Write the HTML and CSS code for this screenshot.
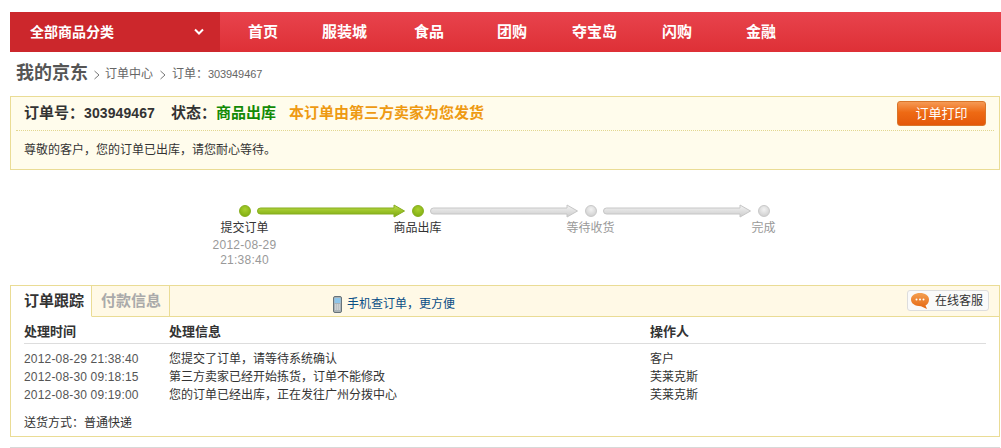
FILE: index.html
```html
<!DOCTYPE html>
<html lang="zh-CN">
<head>
<meta charset="utf-8">
<title>订单详情</title>
<link rel="stylesheet" href="styles.css">
</head>
<body>
<div class="page">
  <nav class="nav">
    <div class="nav-all">
      <span>全部商品分类</span>
      <svg class="chev" width="12" height="8" viewBox="0 0 12 8"><path d="M2 1.5 6 5.5 10 1.5" fill="none" stroke="#fff" stroke-width="2"/></svg>
    </div>
    <ul class="nav-list">
      <li class="w-2">首页</li>
      <li class="w-3">服装城</li>
      <li class="w-2">食品</li>
      <li class="w-2">团购</li>
      <li class="w-3">夺宝岛</li>
      <li class="w-2">闪购</li>
      <li class="w-2">金融</li>
    </ul>
  </nav>

  <div class="crumb">
    <strong class="crumb-title">我的京东</strong>
    <svg class="crumb-sep" width="8" height="10" viewBox="0 0 8 10"><path d="M1.5 1 6 5 1.5 9" fill="none" stroke="#777" stroke-width="1"/></svg>
    <span>订单中心</span>
    <svg class="crumb-sep crumb-sep-2" width="8" height="10" viewBox="0 0 8 10"><path d="M1.5 1 6 5 1.5 9" fill="none" stroke="#777" stroke-width="1"/></svg>
    <span>订单：<span class="crumb-num">303949467</span></span>
  </div>

  <section class="status">
    <div class="status-head">
      <div class="status-line">
        <span class="status-label">订单号：<span class="status-num">303949467</span></span>
        <span class="status-label state">状态：<span class="green">商品出库</span></span>
        <span class="orange">本订单由第三方卖家为您发货</span>
      </div>
      <button class="print" type="button">订单打印</button>
    </div>
    <p class="status-msg">尊敬的客户，您的订单已出库，请您耐心等待。</p>
  </section>

  <section class="steps">
    <div class="track">
      <span class="dot dot-on"></span>
      <svg class="arrow" width="149" height="16" viewBox="0 0 149 16"><defs><linearGradient id="g" x1="0" y1="0" x2="0" y2="1"><stop offset="0" stop-color="#c2dc55"/><stop offset=".5" stop-color="#9cc428"/><stop offset="1" stop-color="#7aa512"/></linearGradient><linearGradient id="h" x1="0" y1="0" x2="0" y2="1"><stop offset="0" stop-color="#f4f4f4"/><stop offset="1" stop-color="#cccccc"/></linearGradient></defs><path d="M3.500 5H137V2L147.500 8 137 14V11H3.500A3 3 0 0 1 3.500 5Z" fill="url(#g)" stroke="#86ad1e" stroke-width="1"/></svg>
      <span class="dot dot-on"></span>
      <svg class="arrow" width="149" height="16" viewBox="0 0 149 16"><path d="M3.500 5H137V2L147.500 8 137 14V11H3.500A3 3 0 0 1 3.500 5Z" fill="url(#h)" stroke="#c6c6c6" stroke-width="1"/></svg>
      <span class="dot"></span>
      <svg class="arrow" width="149" height="16" viewBox="0 0 149 16"><path d="M3.500 5H137V2L147.500 8 137 14V11H3.500A3 3 0 0 1 3.500 5Z" fill="url(#h)" stroke="#c6c6c6" stroke-width="1"/></svg>
      <span class="dot"></span>
    </div>
    <div class="labels">
      <div class="step">
        <div class="step-name">提交订单</div>
        <div class="step-time">2012-08-29<br>21:38:40</div>
      </div>
      <div class="step"><div class="step-name">商品出库</div></div>
      <div class="step off"><div class="step-name">等待收货</div></div>
      <div class="step off"><div class="step-name">完成</div></div>
    </div>
  </section>

  <section class="panel">
    <div class="tabs">
      <div class="tab tab-on">订单跟踪</div>
      <div class="tab">付款信息</div>
      <a class="mobile" href="#">
        <svg width="9" height="17" viewBox="0 0 9 17"><rect x=".5" y=".5" width="8" height="16" rx="1.500" fill="#aab2b6" stroke="#66737a"/><rect x="1.500" y="2" width="6" height="5" fill="#8fc6ea"/><path d="M2 9h1.500M4 9h1.500M6 9h1M2 11h1.500M4 11h1.500M6 11h1M2 13h1.500M4 13h1.500M6 13h1" stroke="#eef1f2" stroke-width="1"/></svg>
        <span>手机查订单，更方便</span>
      </a>
      <a class="service" href="#">
        <svg width="20" height="18" viewBox="0 0 20 18"><defs><linearGradient id="b" x1="0" y1="0" x2="0" y2="1"><stop offset="0" stop-color="#f4a052"/><stop offset="1" stop-color="#e4640f"/></linearGradient></defs><path d="M10 1C15 1 19 3.500 19 7.500 19 10.500 17.500 12.500 15.500 13.500L17 17 11 14.200C5 14.200 1 11.500 1 7.500 1 3.500 5 1 10 1Z" fill="url(#b)"/><circle cx="6.500" cy="7.500" r="1" fill="#fff"/><circle cx="10" cy="7.500" r="1" fill="#fff"/><circle cx="13.500" cy="7.500" r="1" fill="#fff"/></svg>
        <span class="service-text">在线客服</span>
      </a>
    </div>
    <div class="panel-body">
      <div class="row row-head">
        <div>处理时间</div><div>处理信息</div><div>操作人</div>
      </div>
      <div class="rows">
        <div class="row"><div class="time">2012-08-29 21:38:40</div><div>您提交了订单，请等待系统确认</div><div>客户</div></div>
        <div class="row"><div class="time">2012-08-30 09:18:15</div><div>第三方卖家已经开始拣货，订单不能修改</div><div>芙莱克斯</div></div>
        <div class="row"><div class="time">2012-08-30 09:19:00</div><div>您的订单已经出库，正在发往广州分拨中心</div><div>芙莱克斯</div></div>
      </div>
      <p class="ship">送货方式：普通快递</p>
    </div>
  </section>
  <div class="next"></div>
</div>
</body>
</html>
```

FILE: styles.css
```css
* { box-sizing: border-box; }
html, body { margin: 0; padding: 0; height: 448px; overflow: hidden; background: #fff; }
body { font: 12px/18px "Liberation Sans", "Noto Sans CJK SC", sans-serif; color: #333; }
ul, p { margin: 0; padding: 0; list-style: none; }
a { text-decoration: none; }

.page { padding: 12px 0 0 10px; width: 1001px; }

.nav { display: flex; height: 40px; width: 991px; background: linear-gradient(#e8434d, #de3036); color: #fff; font-weight: bold; }
.nav-all { width: 210px; display: flex; align-items: center; justify-content: space-between; padding: 0 15px 0 20px; font-size: 14px; background: #cc272c; }
.chev { display: block; }
.nav-list { display: flex; padding-left: 28px; font-size: 15px; line-height: 40px; gap: 44px; }
.w-2 { width: 30px; white-space: nowrap; }
.w-3 { width: 46px; white-space: nowrap; }
.nav-list .w-2:nth-child(3) { margin-left: 2px; }
.nav-list .w-2:nth-child(4) { margin-left: 9px; }
.nav-list .w-3:nth-child(5) { margin-left: 1px; }
.nav-list .w-2:nth-child(7) { margin-left: 10px; }

.crumb { height: 44px; display: flex; align-items: center; padding: 0 0 0 6px; color: #666; }
.crumb-title { font-size: 18px; color: #555; margin-top: -2px; }
.crumb-sep { margin: 1px 4px 0 5px; }
.crumb-sep-2 { margin-left: 6px; margin-right: 5px; }
.crumb-num { font-size: 11px; letter-spacing: -.1px; }

.status { width: 990px; height: 74px; background: #fffcec; border: 1px solid #eadc95; }
.status-head { height: 34px; margin: 0 5px; padding: 0 8px; display: flex; align-items: center; justify-content: space-between; border-bottom: 1px dotted #e2d790; }
.status-line { display: flex; font-size: 15px; font-weight: bold; line-height: 30px; margin-top: -1px; }
.status-num { font-size: 14px; letter-spacing: .1px; }
.state { margin-left: 16px; }
.green { color: #138a05; }
.orange { color: #ee9a12; margin-left: 13px; }
.print { width: 89px; height: 25px; padding: 0; border: 1px solid #d9752a; border-radius: 3px; color: #fff; font: 13px/23px "Liberation Sans", "Noto Sans CJK SC", sans-serif; background: linear-gradient(#f59a55, #ee6a14 45%, #e4580a); }
.status-msg { padding: 10px 13px 0; line-height: 18px; }

.steps { margin-top: 33px; height: 82px; }
.track { display: flex; align-items: center; gap: 6px; padding-left: 229px; height: 16px; }
.arrow { display: block; flex: none; }
.dot { flex: none; width: 12px; height: 12px; border-radius: 50%; background: radial-gradient(circle at 50% 35%, #f2f2f2, #c9c9c9); border: 1px solid #c8c8c8; }
.dot-on { background: radial-gradient(circle at 50% 35%, #a9d02e, #7aa80e); border-color: #86ae1c; }
.labels { display: flex; padding-left: 148px; }
.step { width: 173px; text-align: center; }
.step-name { line-height: 18px; color: #333; }
.off .step-name { color: #999; }
.step-time { padding-top: 1px; line-height: 15px; color: #999; letter-spacing: .25px; }

.panel { width: 990px; height: 152px; border: 1px solid #eadc95; }
.tabs { height: 31px; display: flex; align-items: stretch; background: #fff9e6; border-bottom: 1px solid #eadc95; }
.tab { width: 78px; padding-left: 9px; font-size: 15px; font-weight: bold; line-height: 30px; color: #aaa; border-right: 1px solid #eadc95; }
.tab-on { width: 81px; padding-left: 13px; height: 31px; color: #333; background: #fff; border-bottom: 1px solid #fff; }
.mobile { margin-left: 163px; display: flex; align-items: center; gap: 5px; padding-top: 6px; color: #0b4f86; }
.service { margin-left: auto; margin-right: 10px; margin-top: 4px; width: 82px; height: 21px; display: flex; align-items: center; gap: 5px; padding: 0 2px; background: #fafafa; border: 1px solid #ddd; border-radius: 3px; color: #333; }
.service-text { padding-top: 1px; }
.panel-body { padding: 0 13px; }
.row { display: grid; grid-template-columns: 145px 481px 1fr; line-height: 18px; }
.row-head { height: 27px; padding-top: 6px; font-size: 13px; font-weight: bold; border-bottom: 1px solid #ddd; }
.rows { padding-top: 6px; }
.time { color: #555; letter-spacing: .17px; }
.ship { margin-top: 10px; }
.next { width: 990px; height: 1px; margin-top: 10px; background: #d8d8d8; }
```
